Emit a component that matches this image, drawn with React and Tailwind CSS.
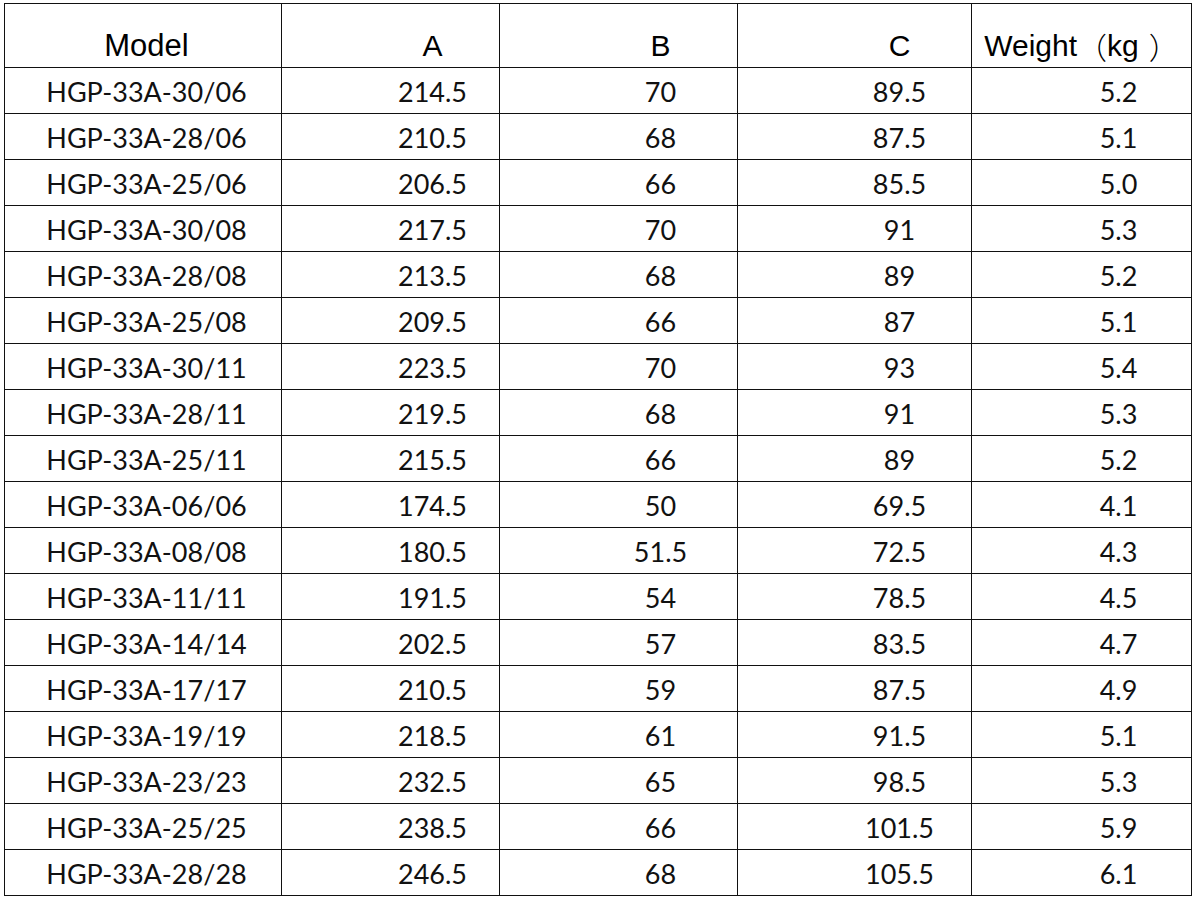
import React from "react";

const rows = [
  ["HGP-33A-30/06", "214.5", "70", "89.5", "5.2"],
  ["HGP-33A-28/06", "210.5", "68", "87.5", "5.1"],
  ["HGP-33A-25/06", "206.5", "66", "85.5", "5.0"],
  ["HGP-33A-30/08", "217.5", "70", "91", "5.3"],
  ["HGP-33A-28/08", "213.5", "68", "89", "5.2"],
  ["HGP-33A-25/08", "209.5", "66", "87", "5.1"],
  ["HGP-33A-30/11", "223.5", "70", "93", "5.4"],
  ["HGP-33A-28/11", "219.5", "68", "91", "5.3"],
  ["HGP-33A-25/11", "215.5", "66", "89", "5.2"],
  ["HGP-33A-06/06", "174.5", "50", "69.5", "4.1"],
  ["HGP-33A-08/08", "180.5", "51.5", "72.5", "4.3"],
  ["HGP-33A-11/11", "191.5", "54", "78.5", "4.5"],
  ["HGP-33A-14/14", "202.5", "57", "83.5", "4.7"],
  ["HGP-33A-17/17", "210.5", "59", "87.5", "4.9"],
  ["HGP-33A-19/19", "218.5", "61", "91.5", "5.1"],
  ["HGP-33A-23/23", "232.5", "65", "98.5", "5.3"],
  ["HGP-33A-25/25", "238.5", "66", "101.5", "5.9"],
  ["HGP-33A-28/28", "246.5", "68", "105.5", "6.1"],
];

const dataPad = ["pl-[7px]", "pl-[84px]", "pl-[84px]", "pl-[90px]", "pl-[74px]"];

export default function App() {
  return (
    <div className="w-[1195px] h-[897px] bg-white pl-[4px] pt-[3px]">
      <div
        className="grid grid-cols-[276px_217px_237px_233px_219px] grid-rows-[63px] auto-rows-[45px] gap-[1px] bg-[#111] border border-[#111] w-[1188px] text-black"
      >
        <div className="bg-white flex items-end justify-center pl-[7px] pb-[3px] text-[31px] leading-[36px] font-['Liberation_Sans',Arial,sans-serif]">Model</div>
        <div className="bg-white flex items-end justify-center pl-[84px] pb-[3px] text-[30px] leading-[36px] font-['Liberation_Sans',Arial,sans-serif]">A</div>
        <div className="bg-white flex items-end justify-center pl-[84px] pb-[3px] text-[30px] leading-[36px] font-['Liberation_Sans',Arial,sans-serif]">B</div>
        <div className="bg-white flex items-end justify-center pl-[90px] pb-[3px] text-[30px] leading-[36px] font-['Liberation_Sans',Arial,sans-serif]">C</div>
        <div className="bg-white flex items-end justify-center pb-[3px] text-[30px] leading-[36px] font-['Liberation_Sans','Noto_Sans_CJK_SC',Arial,sans-serif] whitespace-nowrap">
          Weight<span className="font-['Noto_Sans_CJK_SC',sans-serif] font-light text-[30px]">（</span>kg<span className="ml-[10px] font-['Noto_Sans_CJK_SC',sans-serif] font-light text-[30px]">）</span>
        </div>
        {rows.map((r, i) =>
          r.map((v, j) => (
            <div
              key={i + "-" + j}
              className={"bg-white flex items-center justify-center pt-[2px] text-[27px] leading-none font-['Lato',sans-serif] text-[#111] " + dataPad[j]}
            >
              {v}
            </div>
          ))
        )}
      </div>
    </div>
  );
}
